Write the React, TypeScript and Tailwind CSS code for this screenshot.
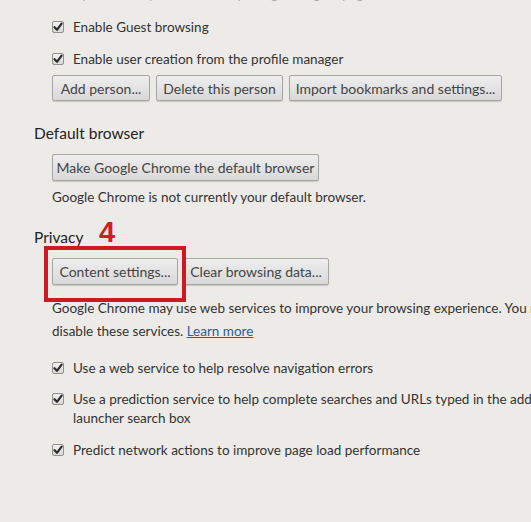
import React from "react";

const font = { fontFamily: 'Lato, "Noto Sans", Arial, sans-serif' };

function Check({ children }: { children: React.ReactNode }) {
  return (
    <div className="flex items-start gap-[9px]">
      <span className="mt-[3px] flex h-[12px] w-[12px] shrink-0 items-center justify-center rounded-[2px] border border-[#8f8f8f] bg-gradient-to-b from-[#f4f4f4] to-[#d8d8d8]">
        <svg width="10" height="10" viewBox="0 0 10 10">
          <path d="M1.5 5.2 L4 7.8 L8.6 1.6" fill="none" stroke="#2b2b2b" strokeWidth="2.2" strokeLinecap="round" strokeLinejoin="round" />
        </svg>
      </span>
      <span className="leading-[19px]">{children}</span>
    </div>
  );
}

function Btn({ children, w, h = "h-[27px]" }: { children: React.ReactNode; w?: string; h?: string }) {
  return (
    <button
      className={`${h} whitespace-nowrap rounded-[2px] border border-[#a6a6a6] bg-gradient-to-b from-[#eeeeee] to-[#d9d9d9] text-[14px] text-[#444] shadow-[0_1px_1px_rgba(0,0,0,0.15)] ${w ?? ""}`}
    >
      {children}
    </button>
  );
}

export default function App() {
  return (
    <div style={font} className="h-[522px] w-[531px] overflow-hidden bg-[#edebe8] text-[13.5px] text-[#333]">
      <div className="-mt-[13px] h-[15px] pl-[60px] leading-[15px] text-[#aaa]">
        Only show the profile currently using the signin page
      </div>

      <div className="mt-[16px] flex flex-col gap-[13px] pl-[52px]">
        <Check>Enable Guest browsing</Check>
        <Check>Enable user creation from the profile manager</Check>
      </div>
      <div className="mt-[6px] flex gap-[6px] pl-[52px]">
        <Btn w="w-[98px]" h="h-[26px]">Add person...</Btn>
        <Btn w="w-[127px]" h="h-[26px]">Delete this person</Btn>
        <Btn w="w-[213px]" h="h-[26px]">Import bookmarks and settings...</Btn>
      </div>

      <div className="mt-[22px] pl-[34px] text-[15.5px] leading-[20px] text-[#222]">Default browser</div>
      <div className="mt-[11px] pl-[52px]">
        <Btn w="w-[267px]">Make Google Chrome the default browser</Btn>
      </div>
      <div className="mt-[6px] pl-[52px] leading-[20px]">Google Chrome is not currently your default browser.</div>

      <div className="relative mt-[20px] pl-[34px] text-[15.5px] leading-[20px] text-[#222]">
        Privacy
        <span
          className="absolute left-[99px] top-[-9px] text-[29px] font-bold leading-[29px] text-[#d01d24]"
          style={{ fontFamily: '"Liberation Sans", Arial, sans-serif' }}
        >
          4
        </span>
      </div>
      <div className="relative mt-[11px] flex gap-[5px] pl-[52px]">
        <Btn w="w-[126px]">Content settings...</Btn>
        <Btn w="w-[146px]">Clear browsing data...</Btn>
        <div className="pointer-events-none absolute left-[44px] top-[-12px] h-[56px] w-[142px] border-[4px] border-[#cc1a22]" />
      </div>

      <div className="mt-[12px] whitespace-nowrap pl-[52px] leading-[23px]">
        Google Chrome may use web services to improve your browsing experience. You may optionally
        <br />
        disable these services.{" "}
        <span className="text-[#2a5e9c] underline">Learn more</span>
      </div>

      <div className="mt-[16px] flex flex-col gap-[12px] whitespace-nowrap pl-[52px]">
        <Check>Use a web service to help resolve navigation errors</Check>
        <Check>
          Use a prediction service to help complete searches and URLs typed in the address bar or the app
          <br />
          launcher search box
        </Check>
        <div className="mt-[1px]">
          <Check>Predict network actions to improve page load performance</Check>
        </div>
      </div>
    </div>
  );
}
